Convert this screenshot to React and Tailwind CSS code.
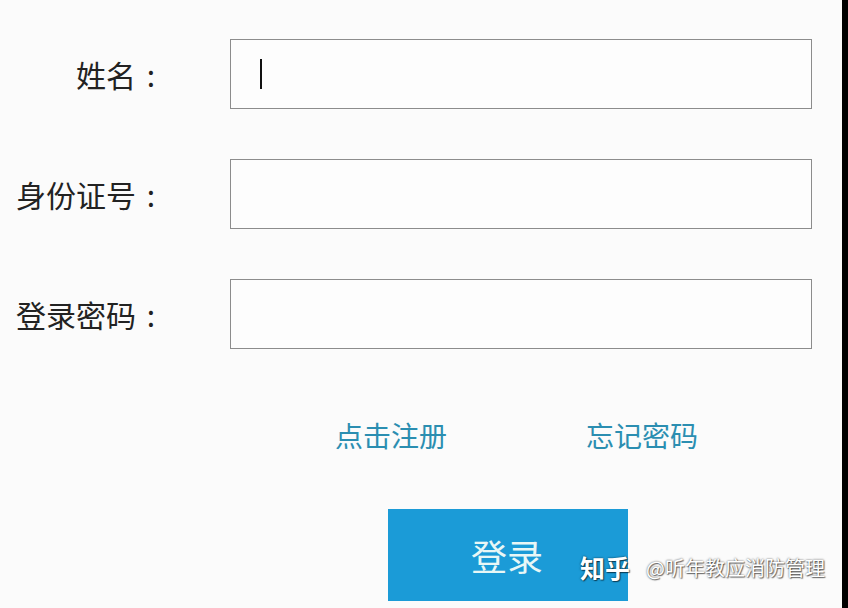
export default function App() {
    const rows = ['姓名', '身份证号', '登录密码']

    return (
        <div className="flex w-[848px] h-[608px] overflow-hidden bg-[#fbfbfb]" style={{ fontFamily: '"Noto Sans CJK SC", "Noto Sans", sans-serif' }}>
            <div className="relative flex-1 flex flex-col pt-[39px]">
                {/* Form rows */}
                <div className="flex flex-col gap-[50px]">
                    {rows.map((label, i) => (
                        <div key={label} className="flex items-center">
                            <div className="w-[166px] flex justify-end text-[30px] leading-none text-[#222]">
                                <span>{label}</span>
                                <span className="w-[30px] text-center">:</span>
                            </div>
                            <div className="ml-[64px] w-[582px] h-[70px] border border-[#8c8c8c] bg-[#fdfdfd] flex items-center">
                                {i === 0 && <div className="ml-[29px] w-[2px] h-[30px] bg-[#111]" />}
                            </div>
                        </div>
                    ))}
                </div>

                {/* Links */}
                <div className="flex mt-[72px] h-[28px] items-center text-[28px] leading-none text-[#2b8eb1]">
                    <span className="ml-[335px]">点击注册</span>
                    <span className="ml-[139px]">忘记密码</span>
                </div>

                {/* Submit */}
                <div className="mt-[60px] ml-[388px] w-[240px] h-[92px] bg-[#1b9bd7] flex items-center justify-center">
                    <span className="text-[36px] leading-none text-[#e8f7f6] ml-[-2px]">登录</span>
                </div>

                {/* Watermark */}
                <div className="absolute left-[580px] top-[555px] flex items-center text-white whitespace-nowrap"
                    style={{ textShadow: '0 0 2px rgba(0,0,0,0.7), 1px 1px 1px rgba(0,0,0,0.5)' }}>
                    <span className="text-[25px] leading-none font-bold">知乎</span>
                    <span className="ml-[16px] text-[20px] leading-none">@听年教应消防管理</span>
                </div>
            </div>
            <div className="w-[6px] bg-black shrink-0" />
        </div>
    )
}
